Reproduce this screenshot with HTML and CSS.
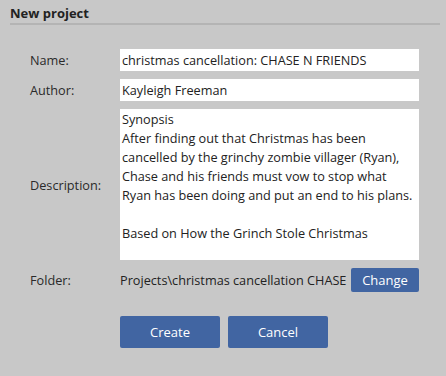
FILE: index.html
```html
<!DOCTYPE html>
<html lang="en">
  <head>
    <meta charset="UTF-8" />
    <title>New project</title>
    <link rel="stylesheet" href="styles.css">
  </head>
  <body>
    <div class="dialog">
      <h1 class="title">New project</h1>
      <div class="form">
        <label class="label">Name:</label>
        <div class="field">christmas cancellation: CHASE N FRIENDS</div>

        <label class="label">Author:</label>
        <div class="field">Kayleigh Freeman</div>

        <label class="label">Description:</label>
        <div class="field area">Synopsis
After finding out that Christmas has been cancelled by the grinchy zombie villager (Ryan), Chase and his friends must vow to stop what Ryan has been doing and put an end to his plans.

Based on How the Grinch Stole Christmas</div>

        <label class="label">Folder:</label>
        <div class="folder">
          <span class="path">Projects\christmas cancellation CHASE</span>
          <button class="btn small">Change</button>
        </div>
      </div>
      <div class="actions">
        <button class="btn big">Create</button>
        <button class="btn big">Cancel</button>
      </div>
    </div>
  </body>
</html>
```

FILE: styles.css
```css
* {
  margin: 0;
  padding: 0;
  box-sizing: border-box;
}
html,
body {
  width: 100%;
  height: 100%;
  background: #c8c8c8;
  font-family: "Open Sans", sans-serif;
  font-size: 12.7px;
  color: #222;
}
.dialog {
  padding: 4px 6px 0 10px;
}
.title {
  font-size: 13px;
  font-weight: bold;
  line-height: 18px;
  padding-bottom: 1px;
  border-bottom: 2px solid #b4b4b4;
}
.form {
  display: grid;
  grid-template-columns: 90px 299px;
  row-gap: 8px;
  align-items: center;
  padding: 24px 0 0 20px;
}
.label {
  color: #2a2a2a;
}
.field {
  background: #fff;
  height: 22px;
  line-height: 22px;
  padding: 0 2px;
  white-space: nowrap;
}
.area {
  height: 151px;
  line-height: 19px;
  padding: 1px 2px;
  white-space: pre-wrap;
}
.folder {
  display: flex;
  align-items: center;
  justify-content: space-between;
  white-space: nowrap;
}
.btn {
  font-family: "Open Sans", sans-serif;
  font-size: 13px;
  color: #fff;
  background: #4165a2;
  border: none;
  border-radius: 2px;
}
.small {
  width: 68px;
  height: 24px;
}
.actions {
  display: flex;
  gap: 8px;
  padding: 24px 0 0 110px;
}
.big {
  width: 100px;
  height: 32px;
}
```
